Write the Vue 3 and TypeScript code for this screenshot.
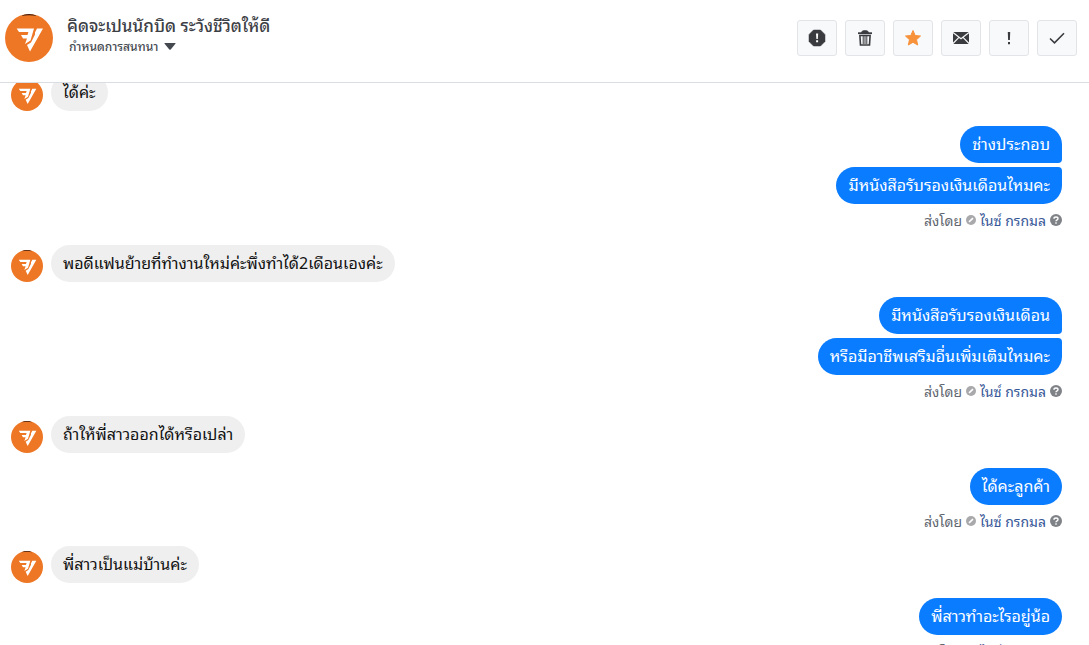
<script setup lang="ts">
import { onMounted, ref } from 'vue'

interface Group {
  from: 'customer' | 'page'
  texts: string[]
}

const groups: Group[] = [
  { from: 'customer', texts: ['ได้ค่ะ'] },
  { from: 'page', texts: ['ช่างประกอบ', 'มีหนังสือรับรองเงินเดือนไหมคะ'] },
  { from: 'customer', texts: ['พอดีแฟนย้ายที่ทำงานใหม่ค่ะพึ่งทำได้2เดือนเองค่ะ'] },
  { from: 'page', texts: ['มีหนังสือรับรองเงินเดือน', 'หรือมีอาชีพเสริมอื่นเพิ่มเติมไหมคะ'] },
  { from: 'customer', texts: ['ถ้าให้พี่สาวออกได้หรือเปล่า'] },
  { from: 'page', texts: ['ได้คะลูกค้า'] },
  { from: 'customer', texts: ['พี่สาวเป็นแม่บ้านค่ะ'] },
  { from: 'page', texts: ['พี่สาวทำอะไรอยู่น้อ'] },
]

const thread = ref<HTMLElement | null>(null)

onMounted(() => {
  if (thread.value) thread.value.scrollTop = 9
})
</script>

<template>
  <div class="inbox">
    <svg class="defs" aria-hidden="true">
      <symbol id="logo" viewBox="0 0 48 48">
        <circle cx="24" cy="24" r="24" fill="#ee7726" />
        <path d="M16 2 Q24 -2 32 2 Q24 .6 16 2z" fill="#3b1d10" />
        <path d="M11.700 14.500H29L25.500 26.500 20 30l2-5.500h-4l-2-3.500h6.500l.9-3H14z" fill="#fff" />
        <path d="M30 18.500l2-4h6L25 37.500 22 31l4-2.500 4-8z" fill="#fff" />
      </symbol>
    </svg>

    <header class="bar">
      <svg class="avatar large" role="img" aria-label="logo"><use href="#logo" /></svg>
      <div class="who">
        <h1>คิดจะเปนนักบิด ระวังชีวิตให้ดี</h1>
        <button class="assign" type="button">
          กำหนดการสนทนา
          <svg width="12" height="7" viewBox="0 0 12 7"><path d="M1 0h10q1 0 .4.800L6.700 6.500q-.7.700-1.400 0L.6.800Q0 0 1 0z" fill="#444950" /></svg>
        </button>
      </div>
      <div class="actions">
        <button type="button" aria-label="Spam">
          <svg viewBox="0 0 20 20"><path d="M6.500 2h7L18 6.500v7L13.500 18h-7L2 13.500v-7z" fill="#3a3b3e" stroke="#3a3b3e" stroke-width=".5" stroke-linejoin="round" /><path d="M9 5.500h2.200l-.4 5.500H9.400zM9.100 12.300h2v2h-2z" fill="#fff" /></svg>
        </button>
        <button type="button" aria-label="Delete">
          <svg viewBox="0 0 20 20" fill="none" stroke="#3a3b3e"><path d="M3 5.200h14" stroke-width="1.800" /><path d="M6.500 4.500Q7 2.800 8.500 2.800h3Q13 2.800 13.500 4.500z" fill="#3a3b3e" /><path d="M4.900 7.500h10.200l-.6 9.500h-9z" stroke-width="1.600" /><path d="M8.200 8v8M10 8v8M11.800 8v8" stroke-width="1" /></svg>
        </button>
        <button type="button" aria-label="Follow up">
          <svg viewBox="0 0 20 20"><path d="M10 2.500l2.200 5 5.300.5-4 3.700 1.200 5.300L10 14.300 5.300 17l1.200-5.300-4-3.700 5.300-.5z" fill="#f7923b" stroke="#f7923b" stroke-width="1" stroke-linejoin="round" /></svg>
        </button>
        <button type="button" aria-label="Mark as unread">
          <svg viewBox="0 0 20 20"><rect x="2" y="4" width="16" height="12" rx="1" fill="#3a3b3e" /><path d="M2 4.500l8 6.300 8-6.300M2 15.500l5.700-5.800M18 15.500l-5.700-5.800" fill="none" stroke="#f5f6f7" stroke-width="1.200" /></svg>
        </button>
        <button type="button" aria-label="Important">
          <svg viewBox="0 0 20 20"><path d="M8.800 4h2.400l-.3 8H9.100zM9 14h2v2.200H9z" fill="#3a3b3e" /></svg>
        </button>
        <button type="button" aria-label="Done">
          <svg viewBox="0 0 20 20"><path d="M3 10.500l4.500 4.300L17 5.200" fill="none" stroke="#3a3b3e" stroke-width="1.600" /></svg>
        </button>
      </div>
    </header>

    <main ref="thread" class="thread">
      <section v-for="(group, i) in groups" :key="i" class="group" :class="group.from">
        <svg v-if="group.from === 'customer'" class="avatar" role="img" aria-label="logo"><use href="#logo" /></svg>
        <div class="stack">
          <p v-for="text in group.texts" :key="text" class="bubble">{{ text }}</p>
          <div v-if="group.from === 'page'" class="sender">
            <span>ส่งโดย</span>
            <svg class="dot" viewBox="0 0 10 10"><circle cx="5" cy="5" r="5" fill="#a9a9ab" /><path d="M3 6.800L7 3.200" stroke="#fff" stroke-width="1.600" /></svg>
            <a href="#">ไนซ์ กรกมล</a>
            <svg class="help" viewBox="0 0 12 12"><circle cx="6" cy="6" r="6" fill="#7f8287" /><path d="M4 4.700Q4 3 6 3t2 1.600Q8 5.500 6.800 6.100 6 6.500 6 7.300M6 8.300v1.500" fill="none" stroke="#fff" stroke-width="1.400" /></svg>
          </div>
        </div>
      </section>
    </main>
  </div>
</template>

<style>
body {
  margin: 0;
}
</style>

<style scoped>
.inbox {
  display: flex;
  flex-direction: column;
  height: 100vh;
  background: #fff;
  font-family: Tahoma, "Noto Sans Thai Looped", Waree, Loma, Garuda, Umpush, "Liberation Sans", sans-serif;
}

.defs {
  position: absolute;
  width: 0;
  height: 0;
}

.bar {
  display: flex;
  flex: none;
  align-items: flex-start;
  padding: 14px 12px 20px 5px;
  border-bottom: 1px solid #dadde1;
}

.avatar {
  flex: none;
  width: 32px;
  height: 32px;
}

.avatar.large {
  width: 48px;
  height: 48px;
}

.who {
  display: flex;
  flex: 1;
  flex-direction: column;
  gap: 2px;
  align-items: flex-start;
  min-width: 0;
  margin-left: 14px;
}

h1 {
  margin: 0;
  color: #3c4045;
  font-size: 17px;
  font-weight: 500;
  line-height: 21px;
}

.assign {
  display: flex;
  gap: 6px;
  align-items: center;
  padding: 0 2px;
  border: 0;
  background: none;
  color: #444950;
  font-family: inherit;
  font-size: 12px;
  font-weight: 500;
  line-height: 18px;
}

.actions {
  display: flex;
  gap: 8px;
  padding-top: 6px;
}

.actions button {
  display: flex;
  align-items: center;
  justify-content: center;
  width: 40px;
  height: 36px;
  padding: 0;
  border: 1px solid #e2e4e7;
  border-radius: 3px;
  background: #f7f9fb;
}

.actions svg {
  width: 20px;
  height: 20px;
}

.thread {
  flex: 1;
  min-height: 0;
  overflow-y: auto;
  scrollbar-width: none;
}

.group {
  display: flex;
  gap: 8px;
  align-items: flex-end;
  padding: 0 27px 15px 11px;
}

.group.page {
  justify-content: flex-end;
  padding-bottom: 13px;
}

.stack {
  display: flex;
  flex-direction: column;
  gap: 4px;
  align-items: flex-start;
}

.page .stack {
  align-items: flex-end;
}

.bubble {
  margin: 0;
  padding: 0 12px 2px;
  border-radius: 19px;
  background: #efefef;
  color: #111;
  font-size: 16px;
  line-height: 35px;
  white-space: nowrap;
}

.page .bubble {
  background: #0a7cff;
  color: #fff;
}

.page .bubble:has(+ .bubble) {
  border-bottom-right-radius: 4px;
}

.page .bubble + .bubble {
  border-top-right-radius: 4px;
}

.sender {
  display: flex;
  gap: 4px;
  align-items: center;
  height: 24px;
  color: #616770;
  font-size: 14px;
  line-height: 24px;
  white-space: nowrap;
}

.sender a {
  color: #385898;
  text-decoration: none;
}

.dot {
  width: 10px;
  height: 10px;
}

.help {
  width: 12px;
  height: 12px;
}
</style>
